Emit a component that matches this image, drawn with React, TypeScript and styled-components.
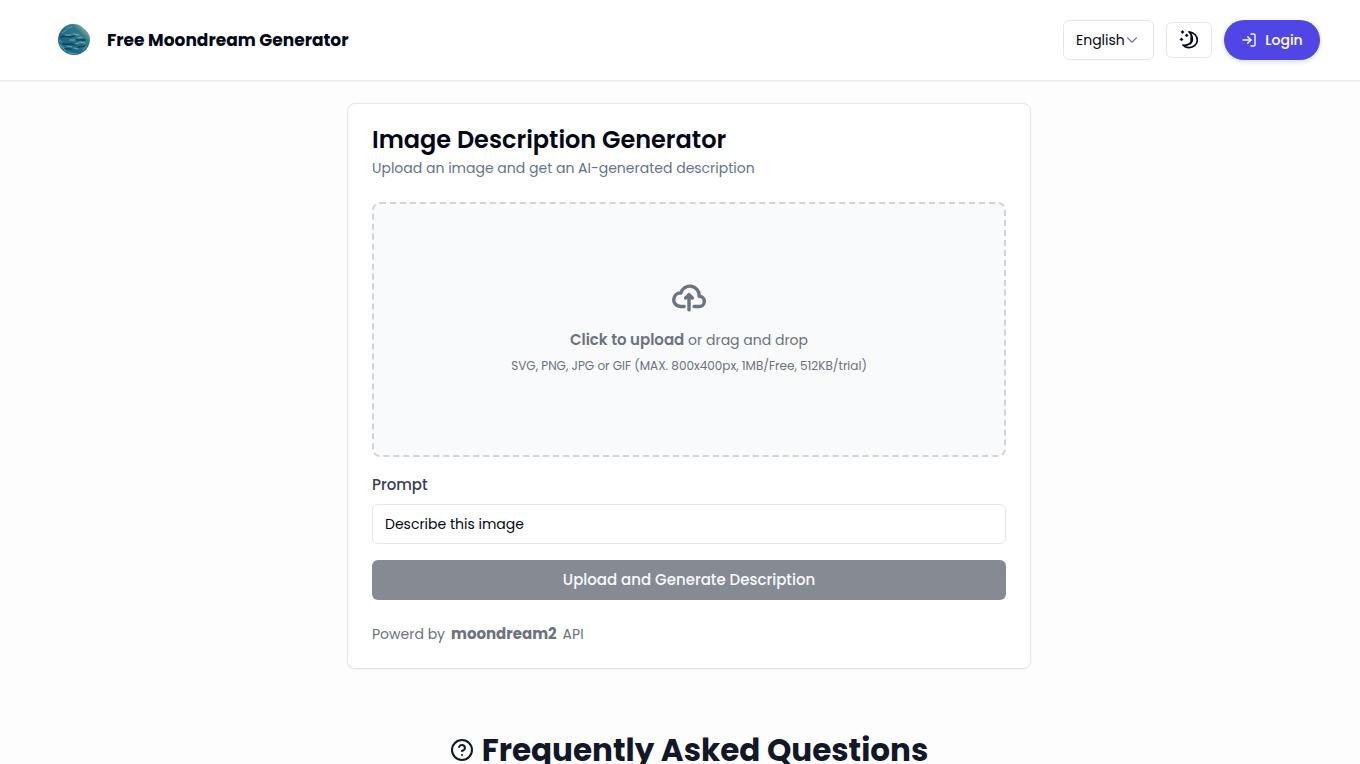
import React, { useState } from "react";
import styled, { createGlobalStyle } from "styled-components";
import { ChevronDown, CircleHelp, LogIn } from "lucide-react";

const GlobalStyle = createGlobalStyle`
  *, *::before, *::after { box-sizing: border-box; }
  body {
    margin: 0;
    background: #fdfdfd;
    color: #020817;
    font-family: Poppins, Inter, "Liberation Sans", sans-serif;
    font-size: 14px;
    line-height: 20px;
  }
  button, input, select { font: inherit; color: inherit; }
  h1, h2, p { margin: 0; }
`;

const Header = styled.header`
  display: flex;
  align-items: center;
  justify-content: space-between;
  height: 81px;
  padding: 0 40px 0 58px;
  background: #fff;
  border-bottom: 1px solid #e9eaed;
  box-shadow: 0 1px 2px rgba(0, 0, 0, 0.05);
`;

const Brand = styled.a`
  display: flex;
  align-items: center;
  gap: 17px;
  color: inherit;
  font-size: 17px;
  font-weight: 700;
  line-height: 24px;
  text-decoration: none;
`;

const Actions = styled.div`
  display: flex;
  align-items: center;
  gap: 12px;
`;

const LanguagePicker = styled.label`
  display: grid;
  align-items: center;
  width: 91px;
  height: 40px;
  border: 1px solid #e5e7eb;
  border-radius: 6px;
  background: #fff;
  > * { grid-area: 1 / 1; }
  > svg {
    justify-self: end;
    margin-right: 12px;
    color: #74777e;
    pointer-events: none;
  }
`;

const LanguageSelect = styled.select`
  width: 100%;
  height: 100%;
  padding: 0 12px;
  border: 0;
  border-radius: 6px;
  background: transparent;
  appearance: none;
`;

const ThemeButton = styled.button`
  display: flex;
  align-items: center;
  justify-content: center;
  width: 46px;
  height: 36px;
  padding: 0;
  border: 1px solid #e5e7eb;
  border-radius: 6px;
  background: #fff;
`;

const LoginButton = styled.button`
  display: flex;
  align-items: center;
  justify-content: center;
  gap: 8px;
  height: 40px;
  width: 96px;
  padding: 0;
  border: 0;
  border-radius: 20px;
  background: #4f46e5;
  color: #fff;
  font-weight: 500;
  box-shadow: 0 2px 5px rgba(0, 0, 0, 0.14);
`;

const Main = styled.main`
  display: flex;
  flex-direction: column;
  align-items: center;
  padding: 22px 0 32px 18px;
`;

const Card = styled.section`
  display: flex;
  flex-direction: column;
  width: 100%;
  max-width: 684px;
  padding: 24px;
  border: 1px solid #e5e7eb;
  border-radius: 8px;
  background: #fff;
  box-shadow: 0 1px 2px rgba(0, 0, 0, 0.05);
`;

const CardTitle = styled.h1`
  font-size: 24px;
  font-weight: 600;
  line-height: 24px;
`;

const CardSubtitle = styled.p`
  margin-top: 6px;
  color: #64748b;
`;

const Form = styled.form`
  display: flex;
  flex-direction: column;
  margin-top: 24px;
`;

const DropZone = styled.label`
  display: flex;
  flex-direction: column;
  align-items: center;
  justify-content: center;
  height: 255px;
  padding-bottom: 4px;
  border: 2px dashed #d1d5db;
  border-radius: 8px;
  background: #f9fafb;
  color: #6b7280;
  cursor: pointer;
`;

const DropText = styled.span`
  margin-top: 16px;
`;

const DropHint = styled.span`
  margin-top: 8px;
  font-size: 12px;
  line-height: 16px;
`;

const Strong = styled.span`
  font-size: 15px;
  font-weight: 600;
`;

const PromptLabel = styled.label`
  margin-top: 18px;
  color: #374151;
  font-size: 15px;
  font-weight: 500;
`;

const PromptInput = styled.input`
  height: 40px;
  margin-top: 9px;
  padding: 0 12px;
  border: 1px solid #e5e7eb;
  border-radius: 6px;
  background: #fff;
`;

const SubmitButton = styled.button`
  height: 40px;
  margin-top: 16px;
  border: 0;
  border-radius: 6px;
  background: #868a93;
  color: #f8fafc;
  font-size: 15px;
  font-weight: 500;
`;

const Powered = styled.p`
  display: flex;
  gap: 6px;
  margin-top: 24px;
  color: #6b7280;
`;

const PoweredLink = styled.a`
  color: inherit;
  font-size: 15px;
  font-weight: 700;
  text-decoration: none;
`;

const FaqTitle = styled.h2`
  display: flex;
  align-items: center;
  gap: 8px;
  margin-top: 61px;
  color: #111827;
  font-size: 31px;
  font-weight: 700;
  line-height: 40px;
`;

function Planet() {
  return (
    <svg width="32" height="32" viewBox="0 0 32 32" aria-hidden="true">
      <defs>
        <linearGradient id="sea" x1="0" y1="1" x2="1" y2="0">
          <stop offset="0" stopColor="#38a3c0" />
          <stop offset="0.3" stopColor="#1d6480" />
          <stop offset="0.7" stopColor="#2f7a88" />
          <stop offset="1" stopColor="#dcd9a8" />
        </linearGradient>
        <clipPath id="disc">
          <path d="M15 0c5 0 8 1.500 10 4 4 2.500 7 6.500 7 11 0 9-7 16-16 16C7 31 0 24 0 16S6 0 15 0z" />
        </clipPath>
      </defs>
      <g clipPath="url(#disc)" fill="none" strokeLinecap="round">
        <path fill="url(#sea)" d="M0 0h32v32H0z" />
        <path stroke="#123f5c" strokeWidth="1.500" d="M3 13c5-2 8 1 13-1M5 20c5 1 8-1 13 1M18 16h9M20 23l7-1M6 25h7" />
        <path stroke="#8fcbd0" strokeWidth=".7" d="M7 11h6M15 10l6 1M12 16h5M20 14l4-1M9 22l5 1M17 20l4-1M16 24l4 1M22 18l5 1" />
        <path stroke="#48a7be" strokeWidth="1" d="M2 21l6 6M11 29l8 1M4 9l4-3M25 26l3-4M1 16l3 2M9 4l5-1" />
      </g>
    </svg>
  );
}

function MoonIcon() {
  return (
    <svg width="20" height="20" viewBox="0 0 20 20" fill="none" aria-hidden="true">
      <path
        d="M10 1.800c4.800.6 8.300 3.900 8.300 8.200 0 4.300-3.700 7.700-8.200 7.700-2.400 0-4.600-.9-6.100-2.500 3.200.4 6.200-.6 7.900-2.700 2.500-3.200 1.500-7.700-1.900-10.700z"
        stroke="currentColor"
        strokeWidth="1.700"
        strokeLinejoin="round"
      />
      <path d="M11.500 4c4 4 3.500 8-1 11.500 1-2 1-4 .8-5.500z" fill="currentColor" />
      <path
        d="M3.500.3L5.200 2 3.500 3.700 1.800 2zM7.700 3.700l1.700 1.700-1.700 1.700L6 5.400zM2.500 7.700l1.700 1.700-1.700 1.700L.8 9.400z"
        fill="currentColor"
        stroke="currentColor"
        strokeWidth=".3"
      />
    </svg>
  );
}

function CloudIcon() {
  return (
    <svg width="34" height="32" viewBox="0 0 20 16" fill="none" aria-hidden="true">
      <path
        d="M13 13h3a3 3 0 0 0 0-6h-.025A5.560 5.560 0 0 0 16 6.500 5.500 5.500 0 0 0 5.207 5.021C5.137 5.017 5.071 5 5 5a4 4 0 0 0 0 8h2.167M10 15V6m0 0L8 8m2-2 2 2"
        stroke="currentColor"
        strokeWidth="2"
        strokeLinecap="round"
        strokeLinejoin="round"
      />
    </svg>
  );
}

const HiddenFile = styled.input`
  position: absolute;
  width: 1px;
  height: 1px;
  opacity: 0;
`;

export default function App() {
  const [prompt, setPrompt] = useState("Describe this image");
  return (
    <>
      <GlobalStyle />
      <Header>
        <Brand href="#">
          <Planet />
          Free Moondream Generator
        </Brand>
        <Actions>
          <LanguagePicker>
            <LanguageSelect aria-label="Language">
              <option>English</option>
            </LanguageSelect>
            <ChevronDown size={18} strokeWidth={1.5} />
          </LanguagePicker>
          <ThemeButton type="button" aria-label="Toggle theme">
            <MoonIcon />
          </ThemeButton>
          <LoginButton type="button">
            <LogIn size={16} />
            Login
          </LoginButton>
        </Actions>
      </Header>
      <Main>
        <Card>
          <CardTitle>Image Description Generator</CardTitle>
          <CardSubtitle>Upload an image and get an AI-generated description</CardSubtitle>
          <Form onSubmit={(e: React.FormEvent) => e.preventDefault()}>
            <DropZone>
              <CloudIcon />
              <DropText>
                <Strong>Click to upload</Strong> or drag and drop
              </DropText>
              <DropHint>SVG, PNG, JPG or GIF (MAX. 800x400px, 1MB/Free, 512KB/trial)</DropHint>
              <HiddenFile type="file" accept="image/*" />
            </DropZone>
            <PromptLabel htmlFor="prompt">Prompt</PromptLabel>
            <PromptInput
              id="prompt"
              type="text"
              value={prompt}
              onChange={(e: React.ChangeEvent<HTMLInputElement>) => setPrompt(e.target.value)}
            />
            <SubmitButton type="submit" disabled>
              Upload and Generate Description
            </SubmitButton>
          </Form>
          <Powered>
            Powerd by <PoweredLink href="#">moondream2</PoweredLink> API
          </Powered>
        </Card>
        <FaqTitle>
          <CircleHelp size={24} />
          Frequently Asked Questions
        </FaqTitle>
      </Main>
    </>
  );
}
